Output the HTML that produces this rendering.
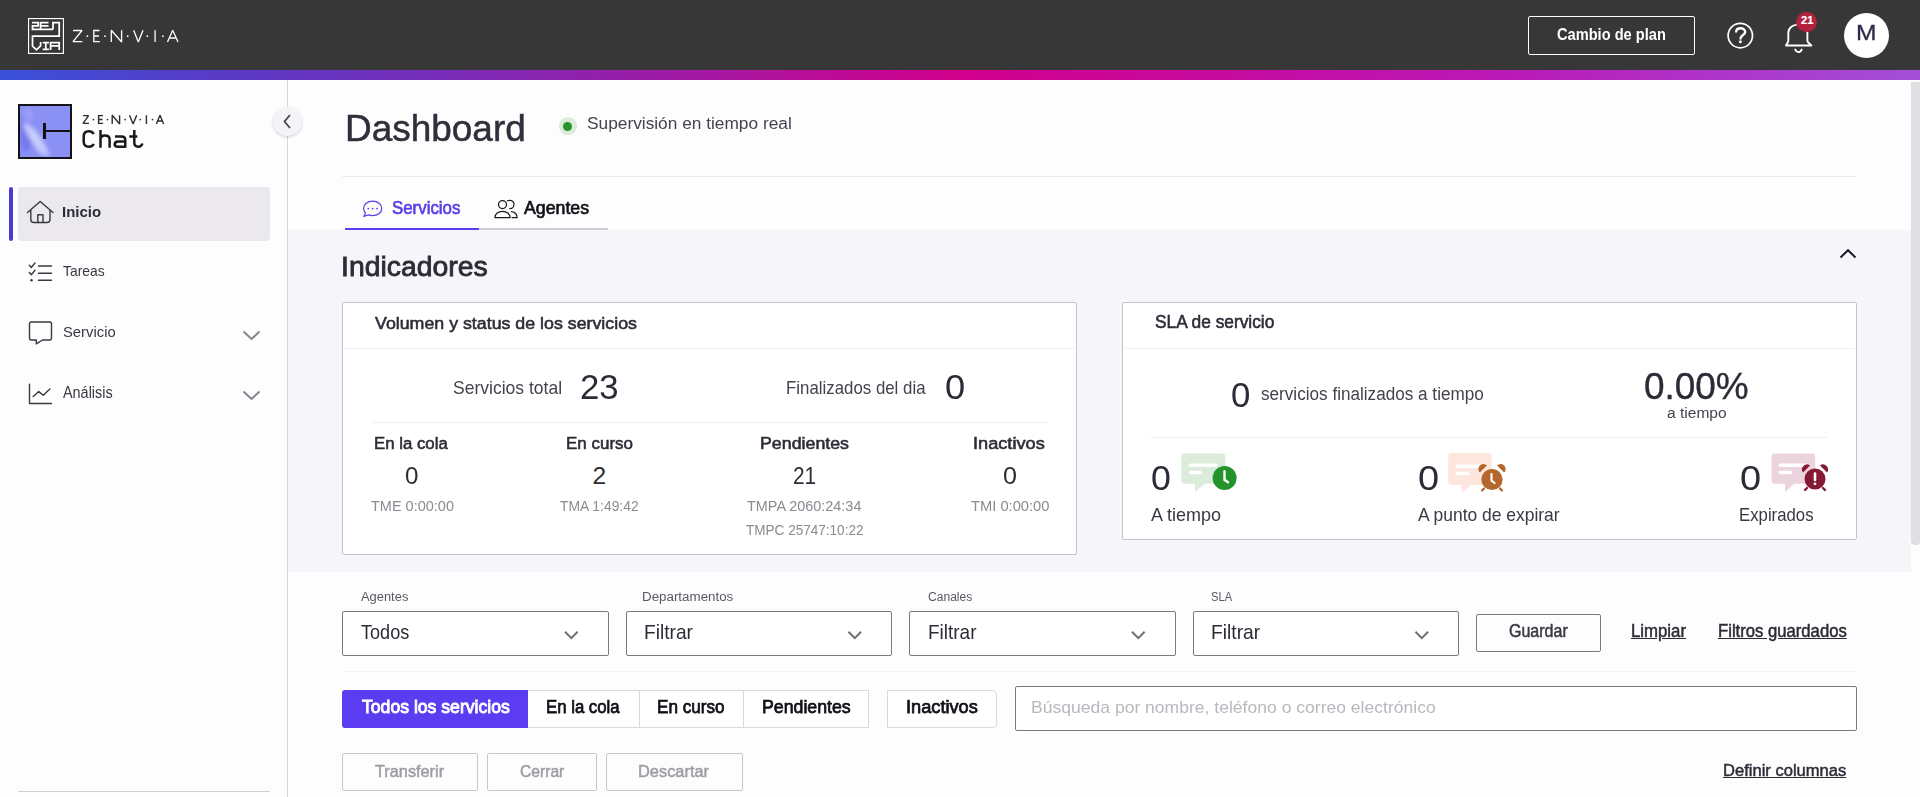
<!DOCTYPE html>
<html><head><meta charset="utf-8">
<style>
*{box-sizing:border-box;margin:0;padding:0}
html,body{width:1920px;height:797px;overflow:hidden;background:#fdfdfe;font-family:"Liberation Sans",sans-serif;color:#2d2b36}
.a{position:absolute}
.t{position:absolute;white-space:nowrap;line-height:1;transform-origin:0 0}
.card{position:absolute;background:#fff;border:1px solid #c4c3c9;border-radius:2px}
.sel{position:absolute;border:1px solid #7a7980;border-radius:2px;background:#fff}
</style></head><body>
<div class="a" style="left:0;top:0;width:1920px;height:70px;background:#373737"></div>
<div class="a" style="left:0;top:70px;width:1920px;height:10px;background:linear-gradient(90deg,#3a50d8 0%,#5a3ac6 12%,#7d2ab5 25%,#b0129c 40%,#d2008c 50%,#c70a9c 62%,#bb18b6 78%,#a24fd9 100%)"></div>
<div class="a" style="left:287px;top:80px;width:1px;height:717px;background:#d9d8dd"></div>
<div class="a" style="left:288px;top:230px;width:1623px;height:342px;background:#f6f5f9"></div>
<div class="a" style="left:1911px;top:82px;width:9px;height:463px;background:#dfdee3;border-radius:0 0 4px 4px"></div>

<!-- header logo -->
<svg class="a" style="left:28px;top:18px" width="36" height="36" viewBox="0 0 36 36" fill="none" stroke="#fff" stroke-width="1.75">
<rect x="0.55" y="0.55" width="34.9" height="34.9" stroke-width="1.2"/>
<path d="M4,4.5H10.2V7.8H4.5V11.4H24.9"/>
<path d="M20.5,4.5H12.6V11.4M12.6,7.8H20.5"/>
<path d="M25,11.4V4.5H31.2V18.1H4.5V28.1L8.5,31.9L12.6,27.9V23.9"/>
<path d="M14.7,24.5H20.9M17.8,24.5V31.4M14.7,31.4H20.9"/>
<path d="M22.6,31.9V24.5H31.2V31.9M22.6,27.9H31.2"/>
</svg>
<svg class="a" style="left:70px;top:26px" width="115" height="20" viewBox="70 26 115 20" fill="none" stroke="#fff" stroke-width="1.3" stroke-miterlimit="1.5">
<path d="M73,30.5H82L73,41.7H82.3"/>
<path d="M99.6,30.5H93.8V41.7H99.8M93.8,36H99"/>
<path d="M111.3,42V30.3L121.6,42V30.3"/>
<path d="M133.7,30.3L138.3,42L143,30.3"/>
<path d="M155.1,30.3V42"/>
<path d="M167.5,42L172.7,30.3L178,42M169.5,38H176"/>
<g fill="#fff" stroke="none"><circle cx="87.4" cy="36.2" r="0.9"/><circle cx="105" cy="36.2" r="0.9"/><circle cx="127.7" cy="36.2" r="0.9"/><circle cx="147.3" cy="36.2" r="0.9"/><circle cx="162.9" cy="36.2" r="0.9"/></g>
</svg>

<!-- header right -->
<div class="a" style="left:1528px;top:16px;width:167px;height:39px;border:1px solid #fff;border-radius:2px"></div>
<svg class="a" style="left:1720px;top:0px" width="110" height="60" viewBox="1720 0 110 60" fill="none" stroke="#fff" stroke-linecap="round">
<circle cx="1740.3" cy="35.6" r="12.2" stroke-width="1.7"/>
<path stroke-width="2.4" d="M1736.2,31.5C1736.4,29.5 1738.1,28.2 1740.6,28.2C1743.3,28.2 1745.2,29.9 1745.2,32C1745.2,34.8 1740.5,35.2 1740.5,38.6"/>
<circle cx="1740.4" cy="41.7" r="1.5" fill="#fff" stroke="none"/>
<path stroke-width="1.9" stroke-linejoin="round" d="M1786,45.5C1786,44.3 1788.2,43.2 1788.3,40.8V33C1788.3,28 1792.5,24.6 1798,24.6C1803.5,24.6 1807.4,28 1807.4,33V40.8C1807.4,43.2 1811.4,44.3 1811.4,45.5Z"/>
<path stroke-width="1.9" d="M1795.2,49.6C1796,51.3 1797.1,52.1 1798.5,52.1C1799.9,52.1 1801,51.3 1801.7,49.6"/>
</svg>
<div class="a" style="left:1796.4px;top:11.8px;width:20.6px;height:20.6px;border-radius:50%;background:#b0223d"></div>
<div class="t" style="left:1796.9px;top:15.2px;width:20.6px;text-align:center;font-size:11px;font-weight:bold;color:#fff;-webkit-text-stroke:0.2px #fff">21</div>
<div class="a" style="left:1844px;top:12.9px;width:45px;height:45px;border-radius:50%;background:#fff"></div>

<!-- sidebar logo -->
<svg class="a" style="left:18px;top:104px" width="54" height="55" viewBox="0 0 54 55">
<defs><filter id="bl" x="-50%" y="-50%" width="200%" height="200%"><feGaussianBlur stdDeviation="2.2"/></filter>
<clipPath id="cp"><rect x="2" y="2" width="50" height="51"/></clipPath></defs>
<rect x="0" y="0" width="54" height="55" fill="#141318"/>
<rect x="2" y="2" width="50" height="51" fill="#8b90f5"/>
<g clip-path="url(#cp)">
<ellipse cx="8" cy="30" rx="6" ry="18" fill="#6f73e8" opacity=".8" filter="url(#bl)"/>
<ellipse cx="17" cy="34" rx="5" ry="19" transform="rotate(-35 17 34)" fill="#d4d8ff" opacity=".85" filter="url(#bl)"/>
<ellipse cx="25" cy="47" rx="4" ry="9" transform="rotate(-50 25 47)" fill="#c4c8ff" opacity=".6" filter="url(#bl)"/>
<ellipse cx="10" cy="12" rx="5" ry="8" fill="#a6aaf8" opacity=".6" filter="url(#bl)"/>
</g>
</svg>
<div class="a" style="left:43.3px;top:123.3px;width:2.8px;height:16px;background:#111"></div>
<div class="a" style="left:46px;top:129.6px;width:25px;height:2.6px;background:#111"></div>
<svg class="a" style="left:78px;top:110px" width="100" height="42" viewBox="78 110 100 42" fill="none" stroke="#2d2b36" stroke-width="1.4" stroke-miterlimit="1.5">
<path d="M83,115.6H88.6L83,123.4H89"/>
<path d="M103,115.6H98.6V123.4H103.1M98.6,119.5H102.5"/>
<path d="M112.2,124V115.2L119.6,124V115.2"/>
<path d="M129.5,115.2L133.1,124L136.7,115.2"/>
<path d="M146.4,115.2V124"/>
<path d="M156.4,124L160,115.2L163.6,124M157.8,121H162.2"/>
<g fill="#2d2b36" stroke="none"><circle cx="93.4" cy="119.6" r="0.85"/><circle cx="107.5" cy="119.6" r="0.85"/><circle cx="125.1" cy="119.6" r="0.85"/><circle cx="140.3" cy="119.6" r="0.85"/><circle cx="152.5" cy="119.6" r="0.85"/></g>
<g stroke="#1a1a1e" stroke-width="2.5">
<path d="M93.6,134.2C93,132.2 91.2,131.3 88.8,131.3C85.5,131.3 83.7,133.4 83.7,136.5V141.8C83.7,144.9 85.5,146.7 88.8,146.7C91.2,146.7 93,145.8 93.6,143.8"/>
<path d="M100.5,130V147.8M100.5,139.2C100.5,136.7 102.3,135.4 105,135.4C107.8,135.4 109.6,136.7 109.6,139.2V147.8"/>
<path d="M115,136.6H121.5C123.8,136.6 125.3,137.6 125.3,140V147.8M125.3,141.6H118.5C116,141.6 114.7,142.8 114.7,144.4C114.7,146 116,146.7 118.5,146.7H125.3"/>
<path d="M129.3,136.4H137.3M134.3,130V142.8C134.3,145.6 135.6,146.7 138.3,146.7C140.6,146.7 141.8,145.8 142.4,143.5"/>
</g>
</svg>

<!-- collapse btn -->
<div class="a" style="left:273px;top:107px;width:29px;height:29px;border-radius:50%;background:#f4f3f7;box-shadow:0 1px 3px rgba(0,0,0,.18)"></div>
<svg class="a" style="left:278px;top:112px" width="19" height="19" viewBox="0 0 19 19" fill="none" stroke="#45434d" stroke-width="1.8"><path d="M12,3L6.5,9.5L12,16"/></svg>

<!-- nav -->
<div class="a" style="left:9px;top:187px;width:4px;height:54px;background:#4b3ad0;border-radius:2px"></div>
<div class="a" style="left:18px;top:187px;width:252px;height:54px;background:#ebe9ee;border-radius:4px"></div>
<svg class="a" style="left:0;top:180px" width="60" height="240" viewBox="0 180 60 240" fill="none" stroke="#3a3842" stroke-width="1.4" stroke-linejoin="round" stroke-linecap="round">
<path d="M27.5,212.5L40.2,201.5L53,212.5"/>
<path d="M30.8,210.5V219.5Q30.8,222.5 33.8,222.5H47Q50,222.5 50,219.5V210.5"/>
<path d="M37.8,222.5V214.8H43V222.5"/>
<path d="M38.5,266H51.5M38.5,273.2H51.5M38.5,280.3H51.5" />
<path d="M29.3,265.3L31.3,267.5L35,263M29.3,272.5L31.3,274.7L35,270.2"/>
<circle cx="31.5" cy="280.2" r="1.25" fill="#3a3842" stroke="none"/>
<path d="M31.5,322H49.5Q51.5,322 51.5,324V338Q51.5,340 49.5,340H42.5L36.3,343.8V340H31.5Q29.5,340 29.5,338V324Q29.5,322 31.5,322Z"/>
<path d="M29.5,384.3V403.5H51.5"/>
<path d="M33.2,396.6L38.8,391.6L43.2,395.3L49.9,389.1"/>
</svg>
<svg class="a" style="left:240px;top:325px" width="24" height="80" viewBox="240 325 24 80" fill="none" stroke="#85848c" stroke-width="2">
<path d="M243.5,331.5L251.5,339L259.5,331.5"/>
<path d="M243.5,391.5L251.5,399L259.5,391.5"/>
</svg>
<div class="a" style="left:18px;top:791px;width:252px;height:1px;background:#d0d0d6"></div>

<!-- page header -->
<div class="a" style="left:559.4px;top:117.4px;width:17.4px;height:17.4px;border-radius:50%;background:#dcecd8"></div>
<div class="a" style="left:563px;top:121.6px;width:9.2px;height:9.2px;border-radius:50%;background:#23952b"></div>
<div class="a" style="left:342px;top:176px;width:1514px;height:1px;background:#ecebef"></div>

<!-- tabs -->
<svg class="a" style="left:360px;top:196px" width="160" height="26" viewBox="360 196 160 26" fill="none" stroke-width="1.25" stroke-linecap="round">
<path stroke="#5b3cf0" d="M372.6,201.2C377.8,201.2 381.7,204.3 381.7,208.4C381.7,212.4 377.8,215.5 372.6,215.5C371,215.5 369.7,215.2 368.5,214.8L364,216.3L365.5,213C364.3,211.8 363.6,210.2 363.6,208.4C363.6,204.3 367.4,201.2 372.6,201.2Z"/>
<g fill="#5b3cf0" stroke="none"><circle cx="368.3" cy="208.6" r="0.9"/><circle cx="372.6" cy="208.6" r="0.9"/><circle cx="377" cy="208.6" r="0.9"/></g>
<g stroke="#1c1b22">
<circle cx="502.5" cy="204.6" r="4"/>
<path d="M495,217.5C495,213.8 498.3,211.3 502.5,211.3C506.7,211.3 510,213.8 510,217.5Z"/>
<path d="M507.5,200.8C508.3,200.4 509,200.3 509.8,200.3C512.2,200.3 514,202.2 514,204.5C514,206.8 512.2,208.7 509.8,208.7"/>
<path d="M511.5,211.6C514.7,212 517,214.3 517,217.5H512"/>
</g>
</svg>
<div class="a" style="left:479px;top:228px;width:129px;height:2px;background:#cfced4"></div>
<div class="a" style="left:345px;top:228px;width:134px;height:2px;background:#5b3cf0"></div>

<!-- chevron up -->
<svg class="a" style="left:1836px;top:245px" width="24" height="16" viewBox="1836 245 24 16" fill="none" stroke="#1c1b2a" stroke-width="2"><path d="M1840.5,257.5L1848,250.2L1855.5,257.5"/></svg>

<!-- cards -->
<div class="card" style="left:342px;top:302px;width:735px;height:253px"></div>
<div class="a" style="left:344px;top:348px;width:731px;height:1px;background:#f0eff3"></div>
<div class="a" style="left:373px;top:422px;width:675px;height:1px;background:#efeef2"></div>

<div class="card" style="left:1122px;top:302px;width:735px;height:238px"></div>
<div class="a" style="left:1124px;top:348px;width:731px;height:1px;background:#f0eff3"></div>
<div class="a" style="left:1150px;top:437px;width:677px;height:1px;background:#efeef2"></div>

<!-- SLA icons -->
<svg class="a" style="left:1175px;top:448px" width="70" height="50" viewBox="0 0 70 50">
<path fill="#dcecda" d="M9.3,5.6H47.2Q50.2,5.6 50.2,8.6V32.8Q50.2,35.8 47.2,35.8H29.5L20,44V35.8H9.3Q6.3,35.8 6.3,32.8V8.6Q6.3,5.6 9.3,5.6Z"/>
<path stroke="#fff" stroke-width="3.6" stroke-linecap="round" d="M15.3,17.3H40.9M15.3,24.5H25.2"/>
<circle cx="49.6" cy="30.1" r="12" fill="#23942b" stroke="#fff" stroke-width="0"/>
<path fill="none" stroke="#fff" stroke-width="2.4" stroke-linecap="round" d="M49.5,23.3V31.8L53,34.3"/>
</svg>
<svg class="a" style="left:1440px;top:448px" width="70" height="50" viewBox="0 0 70 50">
<path fill="#fde6de" d="M11.2,5H48.8Q51.8,5 51.8,8V34Q51.8,37 48.8,37H31.5L22,44.5V37H11.2Q8.2,37 8.2,34V8Q8.2,5 11.2,5Z"/>
<path stroke="#fff" stroke-width="3.6" stroke-linecap="round" d="M17.5,18.3H44M17.5,25.5H27.5"/>
<g fill="#b4682d">
<path d="M39.8,24.5A5,5 0 0 1 47,17.5Z"/>
<path d="M64.2,24.5A5,5 0 0 0 57,17.5Z"/>
<path stroke="#b4682d" stroke-width="2.4" stroke-linecap="round" d="M44,40.5L42,42.5M60,40.5L62,42.5"/>
<circle cx="52" cy="31.5" r="10.6"/>
</g>
<path fill="none" stroke="#fff" stroke-width="2.2" stroke-linecap="round" d="M51.5,26V32.5L54.5,35"/>
</svg>
<svg class="a" style="left:1765px;top:448px" width="70" height="50" viewBox="0 0 70 50">
<path fill="#ecd4df" d="M9.6,5.6H47.2Q50.2,5.6 50.2,8.6V32.8Q50.2,35.8 47.2,35.8H29.5L20,44V35.8H9.6Q6.6,35.8 6.6,32.8V8.6Q6.6,5.6 9.6,5.6Z"/>
<path stroke="#fff" stroke-width="3.6" stroke-linecap="round" d="M15.3,17.3H40.9M15.3,24.5H25.2"/>
<g fill="#861a35">
<path d="M38,24.5A5,5 0 0 1 45,17.5Z"/>
<path d="M62,24.5A5,5 0 0 0 55,17.5Z"/>
<path stroke="#861a35" stroke-width="2.4" stroke-linecap="round" d="M42,40L40,42M58,40L60,42"/>
<circle cx="50" cy="31" r="10.5"/>
</g>
<path fill="none" stroke="#fff" stroke-width="2.6" stroke-linecap="round" d="M50,25.5V32"/>
<circle cx="50" cy="35.8" r="1.4" fill="#fff"/>
</svg>

<!-- filters -->
<div class="sel" style="left:342px;top:611px;width:267px;height:45px"></div>
<div class="sel" style="left:626px;top:611px;width:266px;height:45px"></div>
<div class="sel" style="left:909px;top:611px;width:267px;height:45px"></div>
<div class="sel" style="left:1193px;top:611px;width:266px;height:45px"></div>
<svg class="a" style="left:540px;top:620px" width="920" height="30" viewBox="540 620 920 30" fill="none" stroke="#6f6e76" stroke-width="2">
<path d="M565,631.8L571.3,638.1L577.6,631.8"/>
<path d="M848.5,631.8L854.8,638.1L861.1,631.8"/>
<path d="M1132,631.8L1138.3,638.1L1144.6,631.8"/>
<path d="M1415.5,631.8L1421.8,638.1L1428.1,631.8"/>
</svg>
<div class="a" style="left:1476px;top:614px;width:125px;height:38px;border:1px solid #7a7980;border-radius:2px"></div>
<div class="a" style="left:345px;top:671px;width:1511px;height:1px;background:#f2f1f5"></div>

<!-- segment -->
<div class="a" style="left:342px;top:690px;width:527px;height:38px;border:1px solid #d9d8dd;border-radius:3px 0 0 3px;background:#fff"></div>
<div class="a" style="left:342px;top:690px;width:186px;height:38px;background:#5b3cf0;border-radius:3px 0 0 3px"></div>
<div class="a" style="left:639px;top:691px;width:1px;height:36px;background:#d9d8dd"></div>
<div class="a" style="left:743px;top:691px;width:1px;height:36px;background:#d9d8dd"></div>
<div class="a" style="left:887px;top:690px;width:110px;height:38px;border:1px solid #d9d8dd;border-radius:0 4px 4px 0;background:#fff"></div>
<div class="a" style="left:1015px;top:686px;width:842px;height:45px;border:1px solid #7a7980;border-radius:2px;background:#fff"></div>

<!-- actions -->
<div class="a" style="left:342px;top:753px;width:136px;height:38px;border:1px solid #c6c5cb;border-radius:2px"></div>
<div class="a" style="left:487px;top:753px;width:110px;height:38px;border:1px solid #c6c5cb;border-radius:2px"></div>
<div class="a" style="left:606px;top:753px;width:137px;height:38px;border:1px solid #c6c5cb;border-radius:2px"></div>

<div class="t" style="left:1557.1px;top:26.5px;font-size:15.70px;font-weight:bold;color:#ffffff;transform:scaleX(0.9319);">Cambio de plan</div>
<div class="t" style="left:1856.2px;top:22.3px;font-size:22.09px;font-weight:normal;color:#2d2b4a;transform:scaleX(1.1125);-webkit-text-stroke:0.3px #2d2b4a;">M</div>
<div class="t" style="left:62.3px;top:203.5px;font-size:15.41px;font-weight:bold;color:#2d2b36;transform:scaleX(0.9711);">Inicio</div>
<div class="t" style="left:63.3px;top:263.3px;font-size:15.55px;font-weight:normal;color:#3a3842;transform:scaleX(0.8915);">Tareas</div>
<div class="t" style="left:63.3px;top:324.4px;font-size:15.41px;font-weight:normal;color:#3a3842;transform:scaleX(0.9608);">Servicio</div>
<div class="t" style="left:63.3px;top:383.8px;font-size:16.13px;font-weight:normal;color:#3a3842;transform:scaleX(0.8944);">Análisis</div>
<div class="t" style="left:344.9px;top:110.9px;font-size:36.34px;font-weight:normal;color:#302e3a;transform:scaleX(1.0172);-webkit-text-stroke:0.5px #302e3a;">Dashboard</div>
<div class="t" style="left:586.7px;top:115.3px;font-size:17.30px;font-weight:normal;color:#45434d;transform:scaleX(1.0006);">Supervisión en tiempo real</div>
<div class="t" style="left:391.6px;top:199.5px;font-size:17.59px;font-weight:normal;color:#5a3ee8;transform:scaleX(0.9592);-webkit-text-stroke:0.65px #5a3ee8;">Servicios</div>
<div class="t" style="left:524.4px;top:199.5px;font-size:17.59px;font-weight:normal;color:#111016;transform:scaleX(1.0091);-webkit-text-stroke:0.65px #111016;">Agentes</div>
<div class="t" style="left:341.2px;top:254.3px;font-size:26.74px;font-weight:normal;color:#2d2b36;transform:scaleX(1.0615);-webkit-text-stroke:0.8px #2d2b36;">Indicadores</div>
<div class="t" style="left:375.3px;top:314.7px;font-size:17.01px;font-weight:normal;color:#2d2b36;transform:scaleX(1.0460);-webkit-text-stroke:0.55px #2d2b36;">Volumen y status de los servicios</div>
<div class="t" style="left:1154.7px;top:314.2px;font-size:17.44px;font-weight:normal;color:#2d2b36;transform:scaleX(0.9929);-webkit-text-stroke:0.55px #2d2b36;">SLA de servicio</div>
<div class="t" style="left:453.1px;top:377.5px;font-size:19.04px;font-weight:normal;color:#45434d;transform:scaleX(0.9204);">Servicios total</div>
<div class="t" style="left:580.4px;top:369.9px;font-size:35.43px;font-weight:normal;color:#2d2b36;transform:scaleX(0.9814);">23</div>
<div class="t" style="left:785.5px;top:377.5px;font-size:19.04px;font-weight:normal;color:#45434d;transform:scaleX(0.8851);">Finalizados del dia</div>
<div class="t" style="left:944.8px;top:369.9px;font-size:35.43px;font-weight:normal;color:#2d2b36;transform:scaleX(1.0222);">0</div>
<div class="t" style="left:373.8px;top:436.4px;font-size:16.64px;font-weight:normal;color:#2d2b36;transform:scaleX(1.0101);-webkit-text-stroke:0.55px #2d2b36;">En la cola</div>
<div class="t" style="left:566.0px;top:436.4px;font-size:16.64px;font-weight:normal;color:#2d2b36;transform:scaleX(1.0208);-webkit-text-stroke:0.55px #2d2b36;">En curso</div>
<div class="t" style="left:759.9px;top:436.4px;font-size:16.64px;font-weight:normal;color:#2d2b36;transform:scaleX(1.0699);-webkit-text-stroke:0.55px #2d2b36;">Pendientes</div>
<div class="t" style="left:973.3px;top:436.4px;font-size:16.64px;font-weight:normal;color:#2d2b36;transform:scaleX(1.0934);-webkit-text-stroke:0.55px #2d2b36;">Inactivos</div>
<div class="t" style="left:405.3px;top:463.6px;font-size:24.57px;font-weight:normal;color:#2d2b36;transform:scaleX(0.9846);">0</div>
<div class="t" style="left:592.6px;top:463.6px;font-size:24.57px;font-weight:normal;color:#2d2b36;transform:scaleX(1.0000);">2</div>
<div class="t" style="left:793.3px;top:463.6px;font-size:24.57px;font-weight:normal;color:#2d2b36;transform:scaleX(0.8496);">21</div>
<div class="t" style="left:1002.7px;top:463.6px;font-size:24.57px;font-weight:normal;color:#2d2b36;transform:scaleX(1.0231);">0</div>
<div class="t" style="left:370.6px;top:497.7px;font-size:15.41px;font-weight:normal;color:#8b8a91;transform:scaleX(0.9403);">TME 0:00:00</div>
<div class="t" style="left:560.3px;top:497.7px;font-size:15.41px;font-weight:normal;color:#8b8a91;transform:scaleX(0.9003);">TMA 1:49:42</div>
<div class="t" style="left:747.2px;top:497.7px;font-size:15.41px;font-weight:normal;color:#8b8a91;transform:scaleX(0.9363);">TMPA 2060:24:34</div>
<div class="t" style="left:970.8px;top:497.7px;font-size:15.41px;font-weight:normal;color:#8b8a91;transform:scaleX(0.9542);">TMI 0:00:00</div>
<div class="t" style="left:746.3px;top:522.4px;font-size:15.55px;font-weight:normal;color:#8b8a91;transform:scaleX(0.8713);">TMPC 25747:10:22</div>
<div class="t" style="left:1230.6px;top:377.8px;font-size:35.71px;font-weight:normal;color:#2d2b36;transform:scaleX(0.9722);">0</div>
<div class="t" style="left:1261.0px;top:385.8px;font-size:17.60px;font-weight:normal;color:#45434d;transform:scaleX(0.9736);">servicios finalizados a tiempo</div>
<div class="t" style="left:1644.4px;top:369.2px;font-size:36.86px;font-weight:normal;color:#2d2b36;transform:scaleX(1.0016);-webkit-text-stroke:0.35px #2d2b36;">0.00%</div>
<div class="t" style="left:1667.0px;top:404.8px;font-size:15.50px;font-weight:normal;color:#45434d;transform:scaleX(1.0029);">a tiempo</div>
<div class="t" style="left:1150.7px;top:461.2px;font-size:34.29px;font-weight:normal;color:#2d2b36;transform:scaleX(1.0412);">0</div>
<div class="t" style="left:1417.6px;top:461.2px;font-size:34.29px;font-weight:normal;color:#2d2b36;transform:scaleX(1.1059);">0</div>
<div class="t" style="left:1740.1px;top:461.2px;font-size:34.29px;font-weight:normal;color:#2d2b36;transform:scaleX(1.1059);">0</div>
<div class="t" style="left:1150.6px;top:504.6px;font-size:19.04px;font-weight:normal;color:#3a3842;transform:scaleX(0.9461);">A tiempo</div>
<div class="t" style="left:1418.0px;top:504.6px;font-size:19.04px;font-weight:normal;color:#3a3842;transform:scaleX(0.9169);">A punto de expirar</div>
<div class="t" style="left:1739.1px;top:504.6px;font-size:19.04px;font-weight:normal;color:#3a3842;transform:scaleX(0.8807);">Expirados</div>
<div class="t" style="left:360.9px;top:590.7px;font-size:12.65px;font-weight:normal;color:#5a5862;transform:scaleX(1.0203);">Agentes</div>
<div class="t" style="left:642.3px;top:590.7px;font-size:12.65px;font-weight:normal;color:#5a5862;transform:scaleX(1.0564);">Departamentos</div>
<div class="t" style="left:927.5px;top:590.7px;font-size:12.65px;font-weight:normal;color:#5a5862;transform:scaleX(0.9553);">Canales</div>
<div class="t" style="left:1210.8px;top:590.7px;font-size:12.65px;font-weight:normal;color:#5a5862;transform:scaleX(0.8830);">SLA</div>
<div class="t" style="left:361.2px;top:622.9px;font-size:19.77px;font-weight:normal;color:#2d2b36;transform:scaleX(0.9156);">Todos</div>
<div class="t" style="left:644.1px;top:623.1px;font-size:19.48px;font-weight:normal;color:#2d2b36;transform:scaleX(0.9845);">Filtrar</div>
<div class="t" style="left:927.7px;top:623.1px;font-size:19.48px;font-weight:normal;color:#2d2b36;transform:scaleX(0.9744);">Filtrar</div>
<div class="t" style="left:1210.8px;top:623.1px;font-size:19.48px;font-weight:normal;color:#2d2b36;transform:scaleX(0.9886);">Filtrar</div>
<div class="t" style="left:1509.2px;top:623.0px;font-size:17.59px;font-weight:normal;color:#3a3842;transform:scaleX(0.9113);-webkit-text-stroke:0.5px #3a3842;">Guardar</div>
<div class="t" style="left:1631.1px;top:623.0px;font-size:17.59px;font-weight:normal;color:#2d2b36;transform:scaleX(0.9545);-webkit-text-stroke:0.5px #2d2b36;text-decoration:underline;text-underline-offset:1px">Limpiar</div>
<div class="t" style="left:1717.9px;top:623.0px;font-size:17.59px;font-weight:normal;color:#2d2b36;transform:scaleX(0.9480);-webkit-text-stroke:0.5px #2d2b36;text-decoration:underline;text-underline-offset:1px">Filtros guardados</div>
<div class="t" style="left:361.7px;top:697.8px;font-size:18.60px;font-weight:normal;color:#ffffff;transform:scaleX(0.9471);-webkit-text-stroke:0.9px #ffffff;">Todos los servicios</div>
<div class="t" style="left:545.8px;top:697.8px;font-size:18.60px;font-weight:normal;color:#111016;transform:scaleX(0.9014);-webkit-text-stroke:0.75px #111016;">En la cola</div>
<div class="t" style="left:657.3px;top:697.8px;font-size:18.60px;font-weight:normal;color:#111016;transform:scaleX(0.9204);-webkit-text-stroke:0.75px #111016;">En curso</div>
<div class="t" style="left:761.7px;top:697.8px;font-size:18.60px;font-weight:normal;color:#111016;transform:scaleX(0.9537);-webkit-text-stroke:0.75px #111016;">Pendientes</div>
<div class="t" style="left:906.2px;top:697.8px;font-size:18.60px;font-weight:normal;color:#111016;transform:scaleX(0.9781);-webkit-text-stroke:0.75px #111016;">Inactivos</div>
<div class="t" style="left:1030.9px;top:698.5px;font-size:17.22px;font-weight:normal;color:#b9b8be;transform:scaleX(1.0197);">Búsqueda por nombre, teléfono o correo electrónico</div>
<div class="t" style="left:375.2px;top:762.6px;font-size:17.01px;font-weight:normal;color:#9d9ca3;transform:scaleX(0.9580);-webkit-text-stroke:0.5px #9d9ca3;">Transferir</div>
<div class="t" style="left:520.0px;top:762.6px;font-size:17.01px;font-weight:normal;color:#9d9ca3;transform:scaleX(0.9194);-webkit-text-stroke:0.5px #9d9ca3;">Cerrar</div>
<div class="t" style="left:638.4px;top:762.6px;font-size:17.01px;font-weight:normal;color:#9d9ca3;transform:scaleX(0.9641);-webkit-text-stroke:0.5px #9d9ca3;">Descartar</div>
<div class="t" style="left:1723.4px;top:762.1px;font-size:16.13px;font-weight:normal;color:#2d2b36;transform:scaleX(1.0276);-webkit-text-stroke:0.45px #2d2b36;text-decoration:underline;text-underline-offset:1px">Definir columnas</div>
</body></html>
